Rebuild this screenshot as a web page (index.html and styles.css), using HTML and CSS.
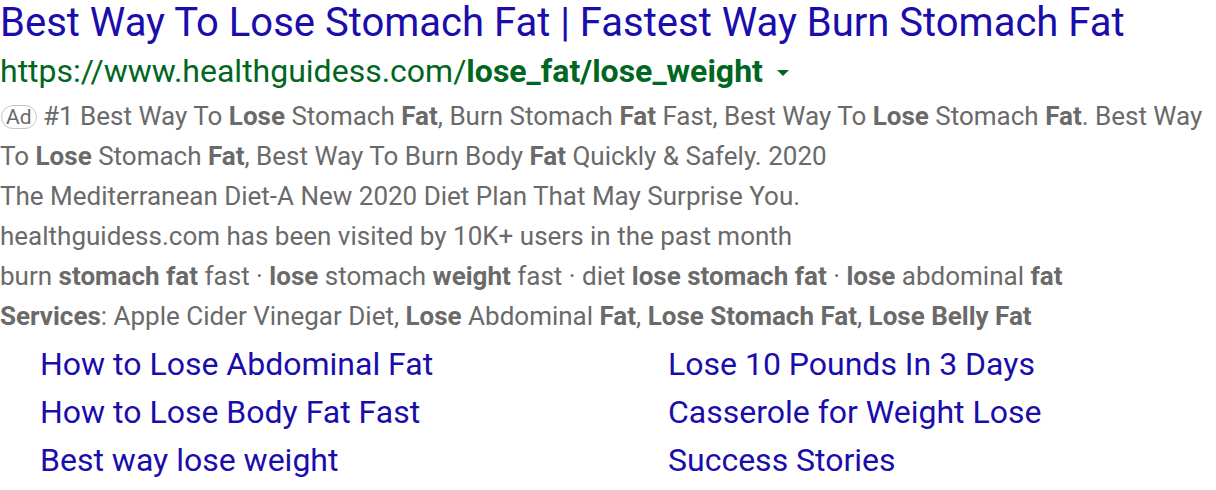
FILE: index.html
```html
<!DOCTYPE html>
<html>
<head>
<meta charset="utf-8">
<link rel="stylesheet" href="styles.css">
</head>
<body>
<div class="ad">
  <a class="title" href="#">Best Way To Lose Stomach Fat | Fastest Way Burn Stomach Fat</a>
  <div class="url">https://www.healthguidess.com/<b>lose_fat/lose_weight</b><span class="caret"></span></div>
  <div class="desc"><span class="badge">Ad</span> #1 Best Way To <b>Lose</b> Stomach <b>Fat</b>, Burn Stomach <b>Fat</b> Fast, Best Way To <b>Lose</b> Stomach <b>Fat</b>. Best Way To <b>Lose</b> Stomach <b>Fat</b>, Best Way To Burn Body <b>Fat</b> Quickly &amp; Safely. 2020</div>
  <div class="line">The Mediterranean Diet-A New 2020 Diet Plan That May Surprise You.</div>
  <div class="line">healthguidess.com has been visited by 10K+ users in the past month</div>
  <div class="line">burn <b>stomach fat</b> fast · <b>lose</b> stomach <b>weight</b> fast · diet <b>lose stomach fat</b> · <b>lose</b> abdominal <b>fat</b></div>
  <div class="line"><b>Services</b>: Apple Cider Vinegar Diet, <b>Lose</b> Abdominal <b>Fat</b>, <b>Lose Stomach Fat</b>, <b>Lose Belly Fat</b></div>
  <div class="sitelinks">
    <a href="#">How to Lose Abdominal Fat</a>
    <a href="#">Lose 10 Pounds In 3 Days</a>
    <a href="#">How to Lose Body Fat Fast</a>
    <a href="#">Casserole for Weight Lose</a>
    <a href="#">Best way lose weight</a>
    <a href="#">Success Stories</a>
  </div>
</div>
</body>
</html>
```
FILE: styles.css
```css
html, body {
  margin: 0;
  padding: 0;
  background: #fff;
}
body {
  font-family: Roboto, "Liberation Sans", Arial, sans-serif;
}
.title {
  display: block;
  color: #1a0dab;
  text-decoration: none;
  font-size: 40px;
  line-height: 46px;
}
.url {
  color: #006621;
  font-size: 32px;
  line-height: 50px;
  height: 50px;
  display: flex;
  align-items: center;
  white-space: nowrap;
}
.url b {
  font-weight: 700;
}
.caret {
  display: inline-block;
  width: 0;
  height: 0;
  border-left: 6px solid transparent;
  border-right: 6px solid transparent;
  border-top: 6px solid #006621;
  margin-left: 14px;
  margin-top: 4px;
}
.desc, .line {
  color: #6a6a6a;
  font-size: 26px;
  line-height: 40px;
}
.desc b, .line b {
  color: #6a6a6a;
  font-weight: 700;
}
.badge {
  display: inline-block;
  box-sizing: border-box;
  height: 24px;
  margin-left: 1px;
  border: 1px solid #c6c6c6;
  border-radius: 12px;
  font-size: 21px;
  line-height: 22px;
  padding: 0 4px;
  color: #6a6a6a;
  vertical-align: 1px;
}
.sitelinks {
  display: grid;
  grid-template-columns: 628px auto;
  padding-left: 40px;
  margin-top: 4px;
}
.sitelinks a {
  color: #1a0dab;
  text-decoration: none;
  font-size: 32px;
  line-height: 48px;
}
```
